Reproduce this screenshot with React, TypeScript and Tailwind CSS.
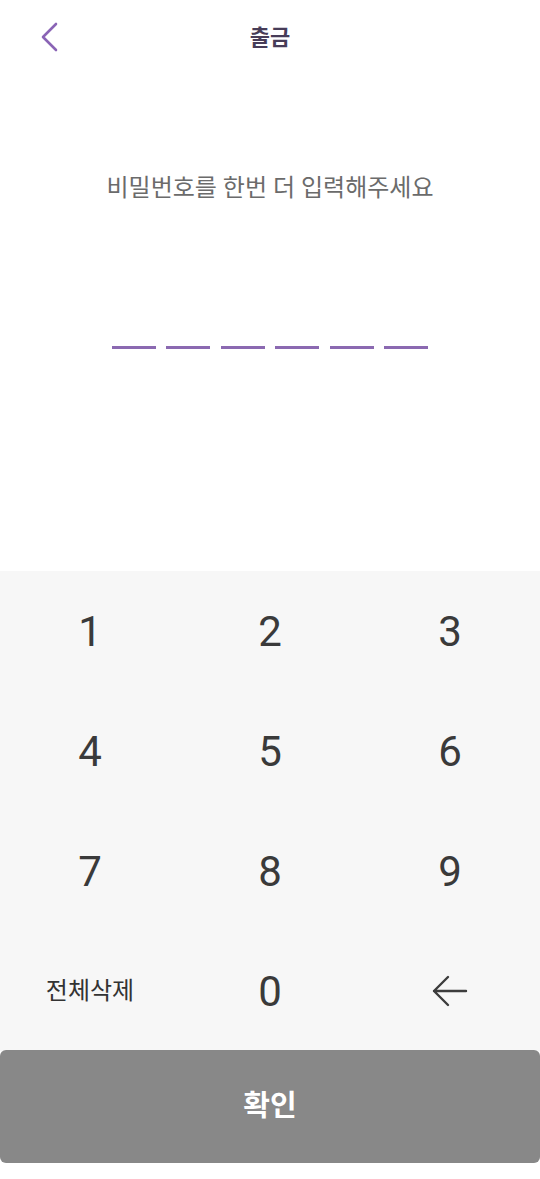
import React from 'react';

const keys = ['1', '2', '3', '4', '5', '6', '7', '8', '9'];

const App: React.FC = () => {
  const font = { fontFamily: '"Roboto", "Noto Sans CJK KR", sans-serif' };

  return (
    <div className="w-[540px] h-[1179px] bg-white flex flex-col" style={font}>
      {/* header */}
      <div className="relative h-[76px] flex items-center justify-center">
        <button className="absolute left-[36px] top-[20px] w-[26px] h-[34px] flex items-center justify-center">
          <svg width="20" height="32" viewBox="0 0 20 32" fill="none">
            <path d="M17 3 L4 16 L17 29" stroke="#8a64b5" strokeWidth="2.6" strokeLinecap="round" strokeLinejoin="round" />
          </svg>
        </button>
        <h1 className="text-[22px] font-bold text-[#473c58] -mt-[2px]">출금</h1>
      </div>

      {/* prompt */}
      <p className="mt-[94px] text-center text-[24px] text-[#6b6b6b] leading-[36px]">
        비밀번호를 한번 더 입력해주세요
      </p>

      {/* pin slots */}
      <div className="mt-[140px] flex justify-center gap-[10.4px]">
        {Array.from({ length: 6 }).map((_, i) => (
          <div key={i} className="w-[44px] h-[3px] bg-[#8b69b1]" />
        ))}
      </div>

      <div className="flex-1" />

      {/* keypad */}
      <div className="bg-[#f7f7f7]">
        <div className="grid grid-cols-3">
          {keys.map((k) => (
            <button key={k} className="h-[120px] flex items-center justify-center text-[42px] text-[#3a3a3a]">
              {k}
            </button>
          ))}
          <button className="h-[120px] flex items-center justify-center text-[24px] text-[#333333]">
            전체삭제
          </button>
          <button className="h-[120px] flex items-center justify-center text-[42px] text-[#3a3a3a]">
            0
          </button>
          <button className="h-[120px] flex items-center justify-center">
            <svg width="38" height="34" viewBox="0 0 38 34" fill="none">
              <path d="M35 17 H3 M17 3 L3 17 L17 31" stroke="#3d3d3d" strokeWidth="2.4" strokeLinecap="round" strokeLinejoin="round" />
            </svg>
          </button>
        </div>
      </div>
      <div className="bg-white pb-[16px]">
        <button className="w-full h-[113px] -mt-[1px] rounded-[6px] bg-[#888888] text-white text-[29px] font-bold flex items-center justify-center">
          확인
        </button>
      </div>
    </div>
  );
};

export default App;
